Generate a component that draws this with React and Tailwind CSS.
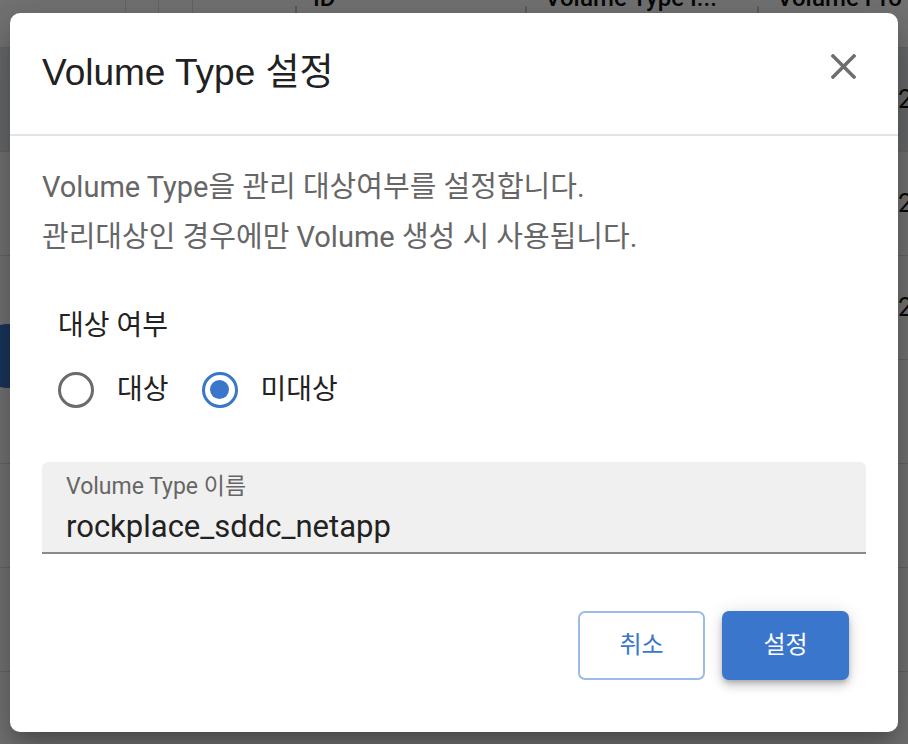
import { useState } from "react";

const rows = [0, 1, 2, 3, 4, 5];

function Radio({ checked, label, onClick }) {
  return (
    <button type="button" onClick={onClick} className="flex items-center gap-[23px]">
      <span
        className={
          "flex h-[36px] w-[36px] items-center justify-center rounded-full border-[3.5px] " +
          (checked ? "border-[#3a76cc]" : "border-[#6b6b6b]")
        }
      >
        {checked && <span className="h-[19px] w-[19px] rounded-full bg-[#3a76cc]" />}
      </span>
      <span className="text-[28px] leading-[36px] text-[#222]">{label}</span>
    </button>
  );
}

export default function App() {
  const [target, setTarget] = useState("no");

  return (
    <div className="relative h-[744px] w-[908px] overflow-hidden bg-white font-['Roboto','Noto_Sans_CJK_KR',sans-serif]">
      {/* table behind the dialog */}
      <div className="flex h-[48px] border-b border-[#e0e0e0] text-[24px] font-medium text-[#111]">
        <div className="w-[126px] border-r border-[#e0e0e0]" />
        <div className="w-[33px] border-r border-[#e0e0e0]" />
        <div className="w-[34px] border-r border-[#e0e0e0]" />
        <div className="w-[102px]" />
        <div className="flex w-[230px] items-start">
          <span className="mt-[6px] h-[34px] w-[2px] bg-[#ccc]" />
          <span className="-mt-[16px] ml-[16px] leading-[28px]">ID</span>
        </div>
        <div className="flex w-[232px] items-start">
          <span className="mt-[6px] h-[34px] w-[2px] bg-[#ccc]" />
          <span className="-mt-[16px] ml-[18px] leading-[28px]">Volume Type I...</span>
        </div>
        <div className="flex flex-1 items-start">
          <span className="mt-[6px] h-[34px] w-[2px] bg-[#ccc]" />
          <span className="-mt-[16px] ml-[18px] whitespace-nowrap leading-[28px]">Volume Pro</span>
        </div>
      </div>
      {rows.map((r) => (
        <div
          key={r}
          className={
            "flex h-[104px] items-center justify-end border-b border-[#e0e0e0] text-[26px] text-[#111] " +
            (r === 0 ? "bg-[#e6e9ee]" : "bg-white")
          }
        >
          {r < 3 && <span className="w-[10px] overflow-hidden">2</span>}
        </div>
      ))}
      <div className="absolute left-[-24px] top-[324px] flex h-[64px] w-[64px] items-center justify-end rounded-full bg-[#3a76cc] pr-[14px]">
        <svg width="14" height="20" viewBox="0 0 14 20" fill="none" stroke="white" strokeWidth="2.5">
          <path d="M11 2 L3 10 L11 18" />
        </svg>
      </div>

      {/* overlay */}
      <div className="absolute inset-0 flex items-center justify-center bg-[rgba(0,0,0,0.55)]">
        <div className="flex h-[719px] w-[888px] flex-col rounded-[10px] bg-white shadow-[0_11px_15px_-7px_rgba(0,0,0,0.2),0_24px_38px_3px_rgba(0,0,0,0.14),0_9px_46px_8px_rgba(0,0,0,0.12)]">
          <div className="flex h-[123px] items-center justify-between border-b-2 border-[#e4e4e4] pl-[32px] pr-[42px]">
            <h2 className="font-['Liberation_Sans','Noto_Sans_CJK_KR',sans-serif] text-[37px] leading-[44px] text-[#212121]">
              Volume Type 설정
            </h2>
            <button type="button" className="-mt-[14px]">
              <svg width="25" height="25" viewBox="0 0 25 25" stroke="#6e6e6e" strokeWidth="3.5" strokeLinecap="square">
                <path d="M2 2 L23 23 M23 2 L2 23" />
              </svg>
            </button>
          </div>

          <div className="flex flex-1 flex-col px-[32px] pt-[26px]">
            <p className="text-[29px] leading-[50px] text-[#666]">
              Volume Type을 관리 대상여부를 설정합니다.
              <br />
              관리대상인 경우에만 Volume 생성 시 사용됩니다.
            </p>

            <div className="ml-[16px] mt-[46px] text-[28px] leading-[36px] text-[#222]">대상 여부</div>
            <div className="ml-[16px] mt-[24px] flex h-[44px] items-center gap-[33px]">
              <Radio checked={target === "yes"} label="대상" onClick={() => setTarget("yes")} />
              <Radio checked={target === "no"} label="미대상" onClick={() => setTarget("no")} />
            </div>

            <div className="mt-[50px] flex h-[92px] flex-col rounded-t-[6px] border-b-2 border-[#8a8a8a] bg-[#f0f0f0] px-[24px] pt-[13px]">
              <span className="text-[23px] leading-[24px] text-[#666]">Volume Type 이름</span>
              <span className="mt-[10px] text-[31px] leading-[36px] text-[#222]">rockplace_sddc_netapp</span>
            </div>

            <div className="mt-[57px] flex justify-end gap-[17px] pr-[17px]">
              <button
                type="button"
                className="flex h-[69px] w-[127px] items-center justify-center rounded-[7px] border-2 border-[#9cbbe8] text-[24px] text-[#3a76cc]"
              >
                취소
              </button>
              <button
                type="button"
                className="flex h-[69px] w-[127px] items-center justify-center rounded-[7px] bg-[#3a76cc] text-[24px] text-white shadow-[0_3px_5px_-1px_rgba(0,0,0,0.2),0_6px_10px_0_rgba(0,0,0,0.14),0_1px_18px_0_rgba(0,0,0,0.12)]"
              >
                설정
              </button>
            </div>
          </div>
        </div>
      </div>
    </div>
  );
}
